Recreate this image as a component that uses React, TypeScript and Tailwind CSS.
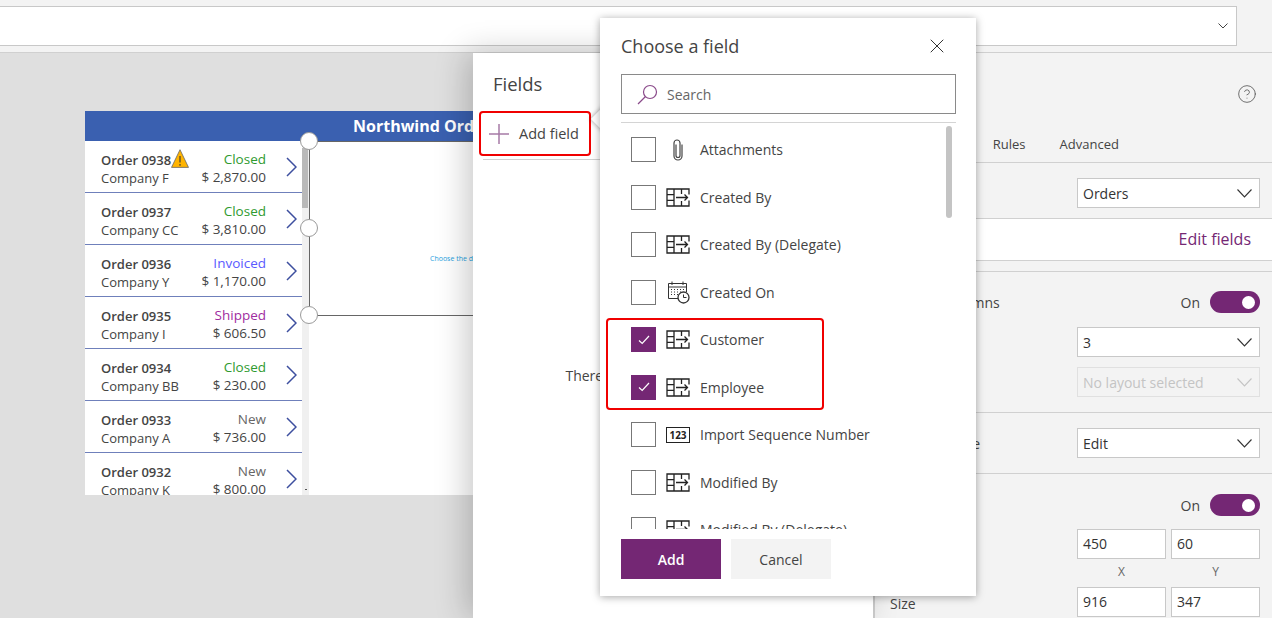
import { CircleHelp, X } from 'lucide-react';

const orders = [
  { id: 'Order 0938', company: 'Company F', status: 'Closed', total: '$ 2,870.00', warn: true },
  { id: 'Order 0937', company: 'Company CC', status: 'Closed', total: '$ 3,810.00' },
  { id: 'Order 0936', company: 'Company Y', status: 'Invoiced', total: '$ 1,170.00' },
  { id: 'Order 0935', company: 'Company I', status: 'Shipped', total: '$ 606.50' },
  { id: 'Order 0934', company: 'Company BB', status: 'Closed', total: '$ 230.00' },
  { id: 'Order 0933', company: 'Company A', status: 'New', total: '$ 736.00' },
  { id: 'Order 0932', company: 'Company K', status: 'New', total: '$ 800.00' },
];

const statusColor: Record<string, string> = {
  Closed: 'text-[#2f9a2f]',
  Invoiced: 'text-[#5a5aff]',
  Shipped: 'text-[#a02ca0]',
  New: 'text-[#666666]',
};

const fields = [
  { name: 'Attachments', icon: 'clip' },
  { name: 'Created By', icon: 'lookup' },
  { name: 'Created By (Delegate)', icon: 'lookup' },
  { name: 'Created On', icon: 'date' },
  { name: 'Customer', icon: 'lookup', checked: true },
  { name: 'Employee', icon: 'lookup', checked: true },
  { name: 'Import Sequence Number', icon: 'number' },
  { name: 'Modified By', icon: 'lookup' },
  { name: 'Modified By (Delegate)', icon: 'lookup' },
];

function FieldIcon({ type }: { type: string }) {
  if (type === 'clip') {
    return (
      <svg width="24" height="24" viewBox="0 0 24 24" fill="none" stroke="#444" strokeWidth="1.2">
        <path d="M10 6.5v11a2 2 0 0 0 4 0V5a3 3 0 0 0-3-3 3 3 0 0 0-3 3v13a4 4 0 0 0 8 0V6.5" />
      </svg>
    );
  }
  if (type === 'number') {
    return (
      <div className="w-[24px] h-[16px] border-[1.5px] border-[#222] flex items-center justify-center text-[10px] font-bold leading-none text-[#222]">
        123
      </div>
    );
  }
  if (type === 'date') {
    return (
      <svg width="24" height="24" viewBox="0 0 24 24" fill="none" stroke="#333" strokeWidth="1">
        <path d="M12 18.5H2.5V3.5H20.5V12" />
        <path d="M2.5 7H20.5M6 1.5V5M17 1.5V5" />
        <path d="M5 9.5h1M8 9.5h1M11 9.5h1M14 9.5h1M17 9.5h1M5 12h1M8 12h1M11 12h1M14 12h1M5 14.5h1M8 14.5h1M11 14.5h1" />
        <circle cx="17.5" cy="17.5" r="5.5" fill="white" strokeWidth="1.3" />
        <path d="M17.5 14.5V17.5H20.5" />
      </svg>
    );
  }
  return (
    <svg width="24" height="19" viewBox="0 0 24 19" fill="none" stroke="#222" strokeWidth="1.3">
      <path d="M23 6.5V1H1V18H23V12.5" />
      <path d="M8 1V18M1 6.7H8M1 12.4H8M15.5 1V6M15.5 13V18" />
      <path d="M10 9.5H21.5M18.5 6.5L21.5 9.5L18.5 12.5" />
    </svg>
  );
}

function Caret() {
  return (
    <svg width="15" height="9" viewBox="0 0 15 9" fill="none" stroke="currentColor" strokeWidth="1.1">
      <path d="M0.5 0.5L7.5 8L14.5 0.5" />
    </svg>
  );
}

function Select({ value, disabled }: { value: string; disabled?: boolean }) {
  return (
    <div
      className={
        disabled
          ? 'w-[183px] h-[30px] border border-[#e0e0e0] bg-[#f3f3f3] flex items-center justify-between pl-[5px] pr-[7px] text-[#c4c4c4]'
          : 'w-[183px] h-[30px] border border-[#c8c8c8] bg-white flex items-center justify-between pl-[5px] pr-[7px] text-[#333]'
      }
    >
      <span>{value}</span>
      <Caret />
    </div>
  );
}

function Toggle() {
  return (
    <div className="w-[50px] h-[22px] rounded-full bg-[#742774] flex items-center justify-end pr-[5px]">
      <div className="w-[13px] h-[13px] rounded-full bg-white" />
    </div>
  );
}

function Handle({ className }: { className: string }) {
  return <div className={`absolute w-[18px] h-[18px] rounded-full bg-white border-[1.5px] border-[#9a9a9a] ${className}`} />;
}

export default function App() {
  return (
    <div className="relative w-[1272px] h-[618px] overflow-hidden bg-[#f3f3f3] flex flex-col font-['Open_Sans',sans-serif] text-[14px] text-[#444]">
      {/* formula bar */}
      <div className="h-[53px] shrink-0 border-b border-[#d0d0d0] pt-[6px]">
        <div className="ml-[-2px] w-[1239px] h-[40px] bg-white border border-[#c8c8c8] flex items-center justify-end pr-[8px]">
          <svg width="10" height="6" viewBox="0 0 10 6" fill="none" stroke="#444" strokeWidth="1">
            <path d="M0.5 0.5L5 5L9.5 0.5" />
          </svg>
        </div>
      </div>

      <div className="flex flex-1 min-h-0">
        {/* canvas */}
        <div className="w-[473px] shrink-0 bg-[#dfdfdf] overflow-hidden pt-[58px] pl-[85px]">
          <div className="w-[800px] h-[384px] bg-white overflow-hidden">
            <div className="h-[30px] bg-[#3a60b0] text-white text-[16px] font-bold leading-[30px] pl-[268px] whitespace-nowrap">
              Northwind Orders
            </div>
            <div className="flex relative">
              <div className="w-[217px] shrink-0">
                {orders.map((o) => (
                  <div key={o.id} className="relative h-[52px] border-b border-[#6f80bb] flex items-center pl-[16px] pr-[5px] text-[13px] leading-[18px]">
                    <div className="flex-1 pt-[4px]">
                      <div className="font-semibold text-[#444] whitespace-nowrap relative">
                        {o.id}
                        {o.warn && (
                          <svg className="absolute left-[70px] top-[-2px]" width="18" height="19" viewBox="0 0 18 19">
                            <path d="M9 0.7L17.5 18.4H0.5Z" fill="#ffb400" stroke="#666" strokeWidth="0.8" />
                            <path d="M9 7V13.5M9 15V16.7" stroke="#333" strokeWidth="1.1" />
                          </svg>
                        )}
                      </div>
                      <div>{o.company}</div>
                    </div>
                    <div className="text-right mr-[20px] pt-[3px] text-[13.5px]">
                      <div className={statusColor[o.status]}>{o.status}</div>
                      <div>{o.total}</div>
                    </div>
                    <svg width="11" height="20" viewBox="0 0 11 20" fill="none" stroke="#3d4f9f" strokeWidth="1.5">
                      <path d="M1 1L10 10L1 19" />
                    </svg>
                  </div>
                ))}
              </div>
              <div className="relative w-[7px] h-[354px] bg-[#f0f0f0] shrink-0">
                <div className="mt-[7px] h-[60px] w-[6px] bg-[#b9b9b9]" />
                <div className="absolute left-[3px] top-[348px] w-[2px] h-[1px] bg-[#555]" />
              </div>
              <div className="relative flex-1 h-[175px] border-l border-t border-b border-[#666]">
                <div className="pl-[120px] pt-[112px] text-[7px] leading-[10px] text-[#1f9fe0] whitespace-nowrap">Choose the data source</div>
              </div>
              <Handle className="left-[215px] top-[-9px]" />
              <Handle className="left-[215px] top-[78px]" />
              <Handle className="left-[215px] top-[165px]" />
            </div>
          </div>
        </div>

        {/* fields pane */}
        <div className="relative w-[400px] shrink-0 bg-white shadow-[-6px_0_30px_rgba(0,0,0,0.22)]">
          <div className="pl-[20px] pt-[18px] text-[18.5px] leading-[26px] text-[#444]">Fields</div>
          <div className="ml-[6px] mt-[14px] w-[112px] h-[45px] border-2 border-[#f00000] rounded-[4px] flex items-center pl-[8px] gap-[10px] bg-white text-[14.5px]">
            <svg width="20" height="20" viewBox="0 0 20 20" stroke="#a67ba6" strokeWidth="1.5">
              <path d="M10 0V20M0 10H20" />
            </svg>
            <span>Add field</span>
          </div>
          <div className="ml-[10px] mt-[3px] border-t border-[#d0d0d0]" />
          <div className="mt-[205px] text-center">There are no fields in this control</div>
        </div>

        {/* properties pane */}
        <div className="flex-1 border-l-2 border-[#d0d0d0] bg-[#f3f3f3]">
          <div className="h-[110px] border-b border-[#d0d0d0] relative pl-[16px] flex items-end pb-[8px] gap-[34px]">
            <CircleHelp className="absolute right-[15px] top-[31px] text-[#555]" size={20} strokeWidth={1} />
            <span>Properties</span>
            <span className="text-[13px]">Rules</span>
            <span className="text-[13px]">Advanced</span>
          </div>
          <div className="h-[56px] border-b border-[#d0d0d0] flex items-start justify-between pl-[16px] pr-[12px] pt-[15px]">
            <span className="pt-[5px]">Data source</span>
            <Select value="Orders" />
          </div>
          <div className="h-[42px] border-b border-[#d0d0d0] bg-white flex items-center justify-between pl-[16px] pr-[21px] pb-[2px]">
            <span>Fields</span>
            <span className="text-[#742774] text-[16px]">Edit fields</span>
          </div>
          <div className="h-[11px] border-b border-[#d0d0d0]" />
          <div className="h-[141px] border-b border-[#d0d0d0] pl-[16px] pr-[12px] pt-[19px]">
            <div className="flex items-center justify-between h-[22px]">
              <span>Snap to columns</span>
              <div className="flex items-center gap-[10px]">
                <span>On</span>
                <Toggle />
              </div>
            </div>
            <div className="mt-[14px] flex items-center justify-between">
              <span>Columns</span>
              <Select value="3" />
            </div>
            <div className="mt-[10px] flex items-center justify-between">
              <span>Layout</span>
              <Select value="No layout selected" disabled />
            </div>
          </div>
          <div className="h-[61px] border-b border-[#d0d0d0] flex items-center justify-between pl-[16px] pr-[12px]">
            <span>Default mode</span>
            <Select value="Edit" />
          </div>
          <div className="pl-[16px] pr-[12px] pt-[19px]">
            <div className="flex items-center justify-between h-[24px]">
              <span>Visible</span>
              <div className="flex items-center gap-[10px]">
                <span>On</span>
                <Toggle />
              </div>
            </div>
            <div className="mt-[12px] flex justify-between">
              <span className="pt-[6px]">Position</span>
              <div className="w-[183px] grid grid-cols-2 gap-x-[5px] text-[#333]">
                <div className="h-[30px] bg-white border border-[#c8c8c8] pl-[5px] leading-[28px]">450</div>
                <div className="h-[30px] bg-white border border-[#c8c8c8] pl-[5px] leading-[28px]">60</div>
                <div className="h-[28px] text-center text-[12px] text-[#666] leading-[26px]">X</div>
                <div className="h-[28px] text-center text-[12px] text-[#666] leading-[26px]">Y</div>
                <div className="h-[30px] bg-white border border-[#c8c8c8] pl-[5px] leading-[28px]">916</div>
                <div className="h-[30px] bg-white border border-[#c8c8c8] pl-[5px] leading-[28px]">347</div>
              </div>
            </div>
            <div className="mt-[-24px] ml-[-1px]">Size</div>
          </div>
        </div>
      </div>

      {/* pointer of the popup, sits under it */}
      <div className="absolute left-[595px] top-[109px] w-[20px] h-[20px] rotate-45 bg-white shadow-[-1px_1px_4px_rgba(0,0,0,0.25)]" />

      {/* choose a field popup */}
      <div className="absolute left-[600px] top-[18px] w-[376px] h-[578px] bg-white shadow-[0_1px_8px_rgba(0,0,0,0.35)] pl-[21px] pr-[20px] flex flex-col">
        <div className="h-[56px] shrink-0 flex items-center justify-between pr-[7px]">
          <span className="text-[18px] text-[#444]">Choose a field</span>
          <X size={24} strokeWidth={1} className="text-[#333]" />
        </div>
        <div className="h-[40px] shrink-0 border border-[#8a8a8a] flex items-center pl-[15px] gap-[9px] text-[#666]">
          <svg width="21" height="21" viewBox="0 0 21 21" fill="none" stroke="#8a4a8a" strokeWidth="1.2">
            <circle cx="13" cy="8" r="6.5" />
            <path d="M8.5 12.5L1 20" />
          </svg>
          <span>Search</span>
        </div>
        <div className="mt-[8px] border-t border-[#d4d4d4]" />
        <div className="relative h-[406px] shrink-0 overflow-hidden pt-[3px]">
          {fields.map((f) => (
            <div key={f.name} className="h-[47.5px] flex items-center pl-[10px] whitespace-nowrap">
              {f.checked ? (
                <div className="w-[25px] h-[25px] bg-[#742774] flex items-center justify-center">
                  <svg width="12" height="10" viewBox="0 0 12 10" fill="none" stroke="white" strokeWidth="1.2">
                    <path d="M1 5.5L4.2 8.5L11 1" />
                  </svg>
                </div>
              ) : (
                <div className="w-[25px] h-[25px] border border-[#777] bg-white" />
              )}
              <div className="w-[24px] ml-[10px] flex justify-center">
                <FieldIcon type={f.icon} />
              </div>
              <span className="ml-[10px]">{f.name}</span>
            </div>
          ))}
          <div className="absolute right-[4px] top-[3px] w-[6px] h-[92px] bg-[#c4c4c4] rounded-full" />
        </div>
        <div className="mt-[10px] flex gap-[10px]">
          <div className="w-[100px] h-[40px] bg-[#742774] text-white font-semibold flex items-center justify-center">Add</div>
          <div className="w-[100px] h-[40px] bg-[#f3f3f3] text-[#444] flex items-center justify-center">Cancel</div>
        </div>
        <div className="absolute left-[6px] top-[300px] w-[218px] h-[92px] border-2 border-[#f00000] rounded-[4px]" />
      </div>
    </div>
  );
}
